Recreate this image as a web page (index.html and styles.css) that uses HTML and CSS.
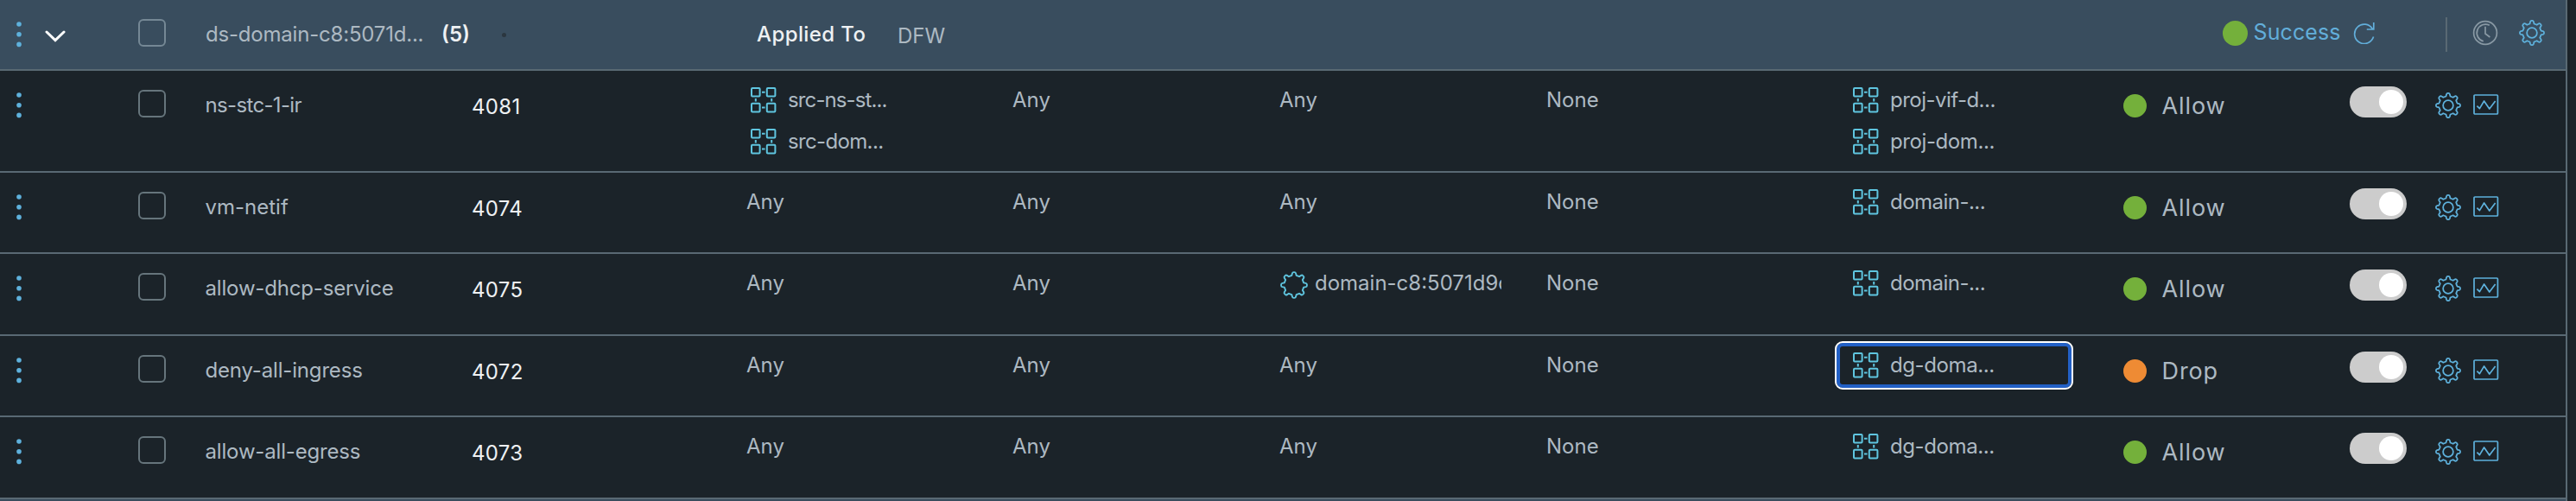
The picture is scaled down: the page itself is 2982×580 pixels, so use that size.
FILE: index.html
```html
<!DOCTYPE html>
<html lang="en">
<head>
<meta charset="utf-8">
<title>Distributed Firewall</title>
<link rel="stylesheet" href="styles.css">
</head>
<body>
<svg class="sprite" aria-hidden="true">
  <symbol id="dots" viewBox="0 0 6 32"><circle cx="3" cy="4" r="2.8"/><circle cx="3" cy="15.7" r="2.8"/><circle cx="3" cy="27.4" r="2.8"/></symbol>
  <symbol id="group" viewBox="0 0 30 30"><g fill="none" stroke="currentColor" stroke-width="2"><rect x="1" y="1" width="9.6" height="9.6" rx="1"/><rect x="18.8" y="1" width="9.6" height="9.6" rx="1"/><rect x="1" y="18.8" width="9.6" height="9.6" rx="1"/><rect x="18.8" y="18.8" width="9.6" height="9.6" rx="1"/><path d="M13 5.8h3.6M13 23.6h3.6M5.8 13v3.6M24.2 13v3.6"/></g></symbol>
  <symbol id="cog-edge" viewBox="0 0 36 36"><path fill="none" stroke="currentColor" stroke-width="2" stroke-linejoin="round" d="M15.2 6.2 15.8 3.6Q16.2 2.2 17.6 2.2H18.4Q19.8 2.2 20.2 3.6L20.8 6.2 24.4 7.6 26.6 6.2Q27.8 5.4 28.8 6.4L29.6 7.2Q30.6 8.2 29.8 9.4L28.4 11.6 29.8 15.2 32.4 15.8Q33.8 16.2 33.8 17.6V18.4Q33.8 19.8 32.4 20.2L29.8 20.8 28.4 24.4 29.8 26.6Q30.6 27.8 29.6 28.8L28.8 29.6Q27.8 30.6 26.6 29.8L24.4 28.4 20.8 29.8 20.2 32.4Q19.8 33.8 18.4 33.8H17.6Q16.2 33.8 15.8 32.4L15.2 29.8 11.6 28.4 9.4 29.8Q8.2 30.6 7.2 29.6L6.4 28.8Q5.4 27.8 6.2 26.6L7.6 24.4 6.2 20.8 3.6 20.2Q2.2 19.8 2.2 18.4V17.6Q2.2 16.2 3.6 15.8L6.2 15.2 7.6 11.6 6.2 9.4Q5.4 8.2 6.4 7.2L7.2 6.4Q8.2 5.4 9.4 6.2L11.6 7.6Z"/></symbol>
  <symbol id="gear" viewBox="0 0 36 36"><use href="#cog-edge"/><circle cx="18" cy="18" r="6.6" fill="none" stroke="currentColor" stroke-width="2"/></symbol>
  <symbol id="chart" viewBox="0 0 30 24"><g fill="none" stroke="currentColor" stroke-width="1.7" stroke-linejoin="round"><rect x="1" y="1" width="27.4" height="22" rx="1"/><path d="M4.4 13.6 7.4 16.6 12.6 8 18.8 17 25.6 8"/></g></symbol>
  <symbol id="clock" viewBox="0 0 30 30"><g fill="none" stroke="currentColor" stroke-width="1.7"><circle cx="15" cy="15" r="13.4"/><path d="M15 7.8V16L20.4 20M19.8 6.2A10 10 0 1 0 12.8 24.8"/></g></symbol>
  <symbol id="refresh" viewBox="0 0 26 26"><path fill="none" stroke="currentColor" stroke-width="1.7" d="M23.6 17.6A11.2 11.2 0 1 1 22.4 8.4M23.8 1V9H15.8"/></symbol>
</svg>
<main class="table">
  <header class="row section">
    <div class="handle"><svg class="dots"><use href="#dots"/></svg><svg class="chevron" viewBox="0 0 24 14"><path d="M2 2l10 9.6L22 2"/></svg></div>
    <div><span class="check"></span></div>
    <div class="title"><span class="title-name">ds-domain-c8:5071d...</span><b class="count">(5)</b><i class="speck"></i></div>
    <div class="applied"><span class="applied-label">Applied To</span><span class="applied-value">DFW</span></div>
    <div class="status"><i class="ball"></i><span class="status-text">Success</span><svg class="refresh"><use href="#refresh"/></svg></div>
    <div class="tools"><svg class="clock"><use href="#clock"/></svg><svg class="gear"><use href="#gear"/></svg></div>
  </header>

  <section class="row rule tall">
    <div class="handle"><svg class="dots"><use href="#dots"/></svg></div>
    <div><span class="check"></span></div>
    <div class="name tight">ns-stc-1-ir</div>
    <div class="id">4081</div>
    <div class="groups"><div class="group"><svg><use href="#group"/></svg><span class="tighter">src-ns-st...</span></div><div class="group"><svg><use href="#group"/></svg><span class="tight">src-dom...</span></div></div>
    <div class="text">Any</div>
    <div class="text">Any</div>
    <div class="text none">None</div>
    <div class="groups boxed"><div class="group"><svg><use href="#group"/></svg><span class="snug">proj-vif-d...</span></div><div class="group"><svg><use href="#group"/></svg><span class="close">proj-dom...</span></div></div>
    <div class="action"><i class="ball"></i><span>Allow</span></div>
    <div class="controls"><span class="toggle"></span><svg class="gear"><use href="#gear"/></svg><svg class="chart"><use href="#chart"/></svg></div>
  </section>

  <section class="row rule">
    <div class="handle"><svg class="dots"><use href="#dots"/></svg></div>
    <div><span class="check"></span></div>
    <div class="name">vm-netif</div>
    <div class="id">4074</div>
    <div class="text">Any</div>
    <div class="text">Any</div>
    <div class="text">Any</div>
    <div class="text none">None</div>
    <div class="groups boxed"><div class="group"><svg><use href="#group"/></svg><span class="snug">domain-...</span></div></div>
    <div class="action"><i class="ball"></i><span>Allow</span></div>
    <div class="controls"><span class="toggle"></span><svg class="gear"><use href="#gear"/></svg><svg class="chart"><use href="#chart"/></svg></div>
  </section>

  <section class="row rule high">
    <div class="handle"><svg class="dots"><use href="#dots"/></svg></div>
    <div><span class="check"></span></div>
    <div class="name near">allow-dhcp-service</div>
    <div class="id">4075</div>
    <div class="text">Any</div>
    <div class="text">Any</div>
    <div class="service"><svg><use href="#cog-edge"/></svg><span>domain-c8:5071d9c</span></div>
    <div class="text none">None</div>
    <div class="groups boxed"><div class="group"><svg><use href="#group"/></svg><span class="snug">domain-...</span></div></div>
    <div class="action"><i class="ball"></i><span>Allow</span></div>
    <div class="controls"><span class="toggle"></span><svg class="gear"><use href="#gear"/></svg><svg class="chart"><use href="#chart"/></svg></div>
  </section>

  <section class="row rule">
    <div class="handle"><svg class="dots"><use href="#dots"/></svg></div>
    <div><span class="check"></span></div>
    <div class="name near">deny-all-ingress</div>
    <div class="id">4072</div>
    <div class="text">Any</div>
    <div class="text">Any</div>
    <div class="text">Any</div>
    <div class="text none">None</div>
    <div class="groups boxed focused"><div class="group"><svg><use href="#group"/></svg><span class="close">dg-doma...</span></div></div>
    <div class="action drop"><i class="ball"></i><span>Drop</span></div>
    <div class="controls"><span class="toggle"></span><svg class="gear"><use href="#gear"/></svg><svg class="chart"><use href="#chart"/></svg></div>
  </section>

  <section class="row rule high">
    <div class="handle"><svg class="dots"><use href="#dots"/></svg></div>
    <div><span class="check"></span></div>
    <div class="name near">allow-all-egress</div>
    <div class="id">4073</div>
    <div class="text">Any</div>
    <div class="text">Any</div>
    <div class="text">Any</div>
    <div class="text none">None</div>
    <div class="groups boxed"><div class="group"><svg><use href="#group"/></svg><span class="close">dg-doma...</span></div></div>
    <div class="action"><i class="ball"></i><span>Allow</span></div>
    <div class="controls"><span class="toggle"></span><svg class="gear"><use href="#gear"/></svg><svg class="chart"><use href="#chart"/></svg></div>
  </section>
  <div class="next-section"></div>
</main>
</body>
</html>
```

FILE: styles.css
```css
* { box-sizing: border-box; }
body {
  margin: 0;
  height: 580px;
  overflow: hidden;
  background: #1b2329;
  color: #adb9c2;
  font: 400 24px/30px Inter, "Liberation Sans", sans-serif;
}
svg { display: block; flex: none; }
.sprite { display: none; }
.table { width: 2972px; height: 580px; border-right: 2px solid #596973; }
.row { display: grid; border-bottom: 2px solid #596973; white-space: nowrap; align-items: start; }
.rule {
  height: 94px;
  grid-template-columns: 160px 77px 309px 318px 308px 309px 309px 334px 333px 263px 1fr;
}
.rule.tall { height: 118px; }
.rule.high { height: 95px; }
.section {
  height: 82px;
  background: #394d5e;
  grid-template-columns: 160px 77px 639px 1696px 259px 1fr;
}
.next-section { height: 2px; background: #394d5e; }

.handle { display: flex; align-items: flex-start; padding: 23.5px 0 0 19px; }
.dots { width: 6px; height: 32px; fill: #5eb1dc; }
.chevron { width: 24px; height: 14px; margin: 11px 0 0 27px; fill: none; stroke: #fff; stroke-width: 3; stroke-linecap: round; }
.check { display: block; width: 32px; height: 32px; margin-top: 22px; border: 2px solid #66757c; border-radius: 6px; }
.section .check { border-color: #758895; }

.title { display: flex; padding: 24.5px 0 0 1px; }
.title-name { width: 273px; letter-spacing: -.2px; }
.count { width: 70px; color: #eef1f3; font-weight: 600; }
.speck { width: 5px; height: 5px; margin-top: 13px; border-radius: 50%; background: #2b363f; }
.applied { display: flex; padding-top: 24.5px; }
.applied-label { width: 163px; color: #eef1f3; font-weight: 500; letter-spacing: .4px; }
.applied-value { margin-top: 2px; }
.status { display: flex; align-items: flex-start; padding-top: 22px; color: #62aeda; }
.status .ball { width: 29px; height: 29px; margin: 1.5px 7px 0 .5px; }
.status-text { width: 115px; font-size: 25px; letter-spacing: .1px; }
.refresh { width: 26px; height: 26px; margin-top: 3px; }
.tools { display: flex; align-items: center; height: 40px; margin-top: 20px; padding: 0 0 4px 29px; border-left: 2px solid #596973; gap: 22.5px; }
.clock { width: 30px; height: 30px; color: #8999a4; }

.gear { width: 32px; height: 32px; color: #5eb1dc; }
.name { padding: 24.5px 0 0 .5px; }
.id { padding-top: 26.5px; color: #eef1f3; letter-spacing: .3px; }
.text { padding-top: 18.5px; }
.groups { padding: 19px 0 0 5px; display: flex; flex-direction: column; gap: 18px; }
.group { display: flex; gap: 13px; height: 30px; }
.group svg { width: 30px; height: 30px; color: #5fc5df; }
.service { display: flex; gap: 7px; width: 257px; overflow: hidden; padding-top: 18.5px; }
.service svg { width: 34px; height: 34px; color: #5fc5df; }
.boxed { width: 276px; min-height: 56px; margin-top: 6px; padding: 7px 15px; border: 6px solid transparent; }
.focused { height: 56px; border: 2px solid #fff; border-radius: 9px; box-shadow: inset 0 0 0 4px #2260c6; padding: 11px 19px; }

.near { letter-spacing: -.17px; }
.close { letter-spacing: -.4px; }
.snug { letter-spacing: -.52px; }
.tight { letter-spacing: -.65px; }
.tighter { letter-spacing: -.88px; }

.ball { display: block; flex: none; width: 27px; height: 27px; border-radius: 50%; background: #74b03b; }
.action { display: flex; gap: 18px; padding: 27px 0 0 .5px; font-size: 27px; letter-spacing: .9px; line-height: 28px; }
.drop .ball { background: #ee8b34; }
.controls { display: flex; align-items: flex-start; padding-top: 18px; }
.toggle { width: 66px; height: 36px; padding: 4px; border-radius: 18px; background: #ccc; display: flex; justify-content: flex-end; }
.toggle::after { content: ""; width: 28px; height: 28px; border-radius: 50%; background: #fff; }
.controls .gear { margin: 6px 0 0 32px; }
.chart { width: 30px; height: 24px; margin: 9px 0 0 13px; color: #5eb1dc; }
```
